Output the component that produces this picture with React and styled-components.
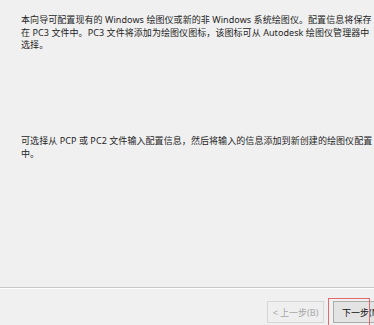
import React from "react";
import styled, { createGlobalStyle } from "styled-components";

const Global = createGlobalStyle`
  html, body {
    margin: 0;
    padding: 0;
    background: #f0f0f0;
    overflow: hidden;
  }
`;

const Page = styled.div`
  width: 374px;
  height: 325px;
  display: flex;
  flex-direction: column;
  background: #f0f0f0;
  font-family: "Noto Sans", "Noto Sans CJK SC", sans-serif;
  color: #1e1e1e;
  overflow: hidden;
`;

const Body = styled.div`
  flex: 1;
  padding: 14px 0 0 21px;
  display: flex;
  flex-direction: column;
  gap: 83px;
`;

const Para = styled.p`
  margin: 0;
  font-size: 9px;
  line-height: 12.7px;
  letter-spacing: 0.07px;
  white-space: nowrap;
`;

const Footer = styled.div`
  border-top: 1px solid #c8c8c8;
  box-shadow: inset 0 1px 0 #ffffff;
  height: 38px;
  display: flex;
  justify-content: flex-end;
  align-items: flex-start;
  gap: 9px;
  padding-top: 13px;
  margin-right: -34px;
  box-sizing: border-box;
`;

const Button = styled.button`
  position: relative;
  width: ${(p) => p.$w}px;
  height: 22px;
  padding: 0;
  font-family: "Noto Sans", "Noto Sans CJK SC", sans-serif;
  font-size: 9px;
  color: ${(p) => (p.disabled ? "#a6a6a6" : "#111")};
  background: ${(p) => (p.disabled ? "#efefef" : "#e3e3e3")};
  border: 1px solid ${(p) => (p.disabled ? "#d6d6d6" : "#acacac")};
  border-radius: 0;
  text-align: ${(p) => (p.disabled ? "center" : "left")};
  padding-left: ${(p) => (p.disabled ? 0 : 8)}px;
`;

const Highlight = styled.span`
  position: absolute;
  left: -6px;
  top: -4px;
  width: 40px;
  height: 40px;
  border: 1px solid #e26a6a;
  pointer-events: none;
`;

export default function App() {
  return (
    <Page>
      <Global />
      <Body>
        <Para>
          本向导可配置现有的 Windows 绘图仪或新的非 Windows 系统绘图仪。配置信息将保存
          <br />
          在 PC3 文件中。PC3 文件将添加为绘图仪图标，该图标可从 Autodesk 绘图仪管理器中
          <br />
          选择。
        </Para>
        <Para>
          可选择从 PCP 或 PC2 文件输入配置信息，然后将输入的信息添加到新创建的绘图仪配置
          <br />
          中。
        </Para>
      </Body>
      <Footer>
        <Button $w={57} disabled>
          &lt; 上一步(B)
        </Button>
        <Button $w={75}>
          下一步(N)
          <Highlight />
        </Button>
      </Footer>
    </Page>
  );
}
